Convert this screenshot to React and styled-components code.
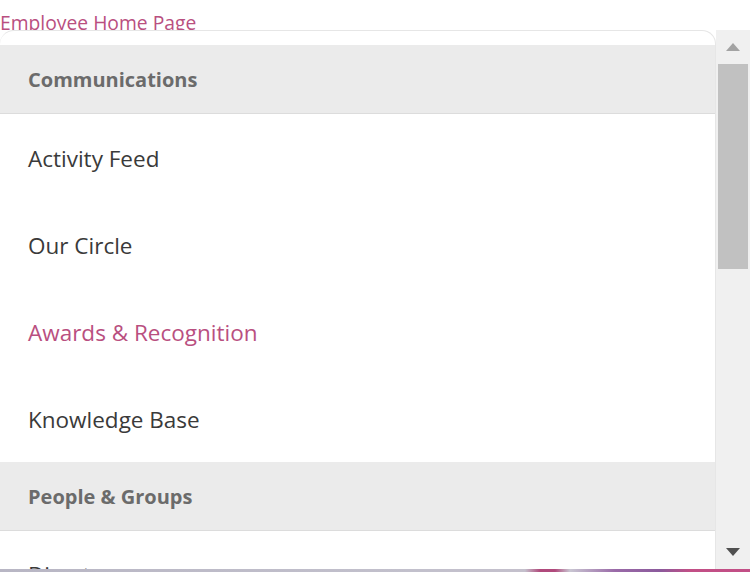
import React from 'react'
import styled, { createGlobalStyle } from 'styled-components'

const GlobalStyle = createGlobalStyle`
    html, body {
        margin: 0;
        padding: 0;
        background-color: #ffffff;
        font-family: "Open Sans", "Noto Sans", sans-serif;
    }
`

const Page = styled.div`
    width: 750px;
    height: 572px;
    display: flex;
    flex-direction: column;
    overflow: hidden;
    background-color: #ffffff;
`

const Crumb = styled.a`
    display: block;
    height: 30px;
    overflow: hidden;
    font-size: 19.3px;
    line-height: 45px;
    color: #b94f80;
    text-decoration: none;
    flex-shrink: 0;
    white-space: nowrap;
`

const Body = styled.div`
    flex: 1;
    display: flex;
    min-height: 0;
`

const Panel = styled.div`
    flex: 1;
    min-width: 0;
    display: flex;
    flex-direction: column;
    padding-top: 14px;
    border: 1px solid #e6e6e6;
    border-bottom: none;
    border-left: none;
    border-radius: 14px 14px 0 0;
    background-color: #ffffff;
    overflow: hidden;
`

const Section = styled.div`
    height: 68px;
    flex-shrink: 0;
    display: flex;
    align-items: center;
    padding-left: 28px;
    background-color: #ebebeb;
    border-bottom: 1px solid #dcdcdc;
    font-size: 20px;
    font-weight: 700;
    color: #6b6b6b;
`

const Item = styled.div`
    height: 87px;
    flex-shrink: 0;
    display: flex;
    align-items: center;
    padding-left: 28px;
    padding-top: 1px;
    box-sizing: border-box;
    font-size: 22.5px;
    color: ${props => props.active ? '#b94f80' : '#3a3a3a'};
`

const LastItem = styled(Item)`
    align-items: flex-start;
    padding-top: 28px;
`

const Scrollbar = styled.div`
    width: 34px;
    flex-shrink: 0;
    display: flex;
    flex-direction: column;
    align-items: center;
    background-color: #f0f0f0;
`

const Arrow = styled.div`
    height: 34px;
    width: 100%;
    display: flex;
    align-items: center;
    justify-content: center;
    flex-shrink: 0;
`

const Thumb = styled.div`
    width: 30px;
    height: 205px;
    background-color: #c1c1c1;
    flex-shrink: 0;
`

const Spacer = styled.div`
    flex: 1;
`

const Strip = styled.div`
    height: 3px;
    flex-shrink: 0;
    background: linear-gradient(90deg, #b8b6c4 0%, #c2c0cc 55%, #c4c0cc 70%, #b04a7c 72%, #b04a7c 74%, #c9c6d2 76%, #9a6aa8 82%, #8b5a9c 88%, #c24f86 92%, #c24f86 100%);
`

const UpIcon = ({ color }) => (
    <svg width="16" height="10" viewBox="0 0 16 10">
        <polygon points="8,1 15,9 1,9" fill={color} />
    </svg>
)

const DownIcon = ({ color }) => (
    <svg width="16" height="10" viewBox="0 0 16 10">
        <polygon points="1,1 15,1 8,9" fill={color} />
    </svg>
)

const communications = ['Activity Feed', 'Our Circle', 'Awards & Recognition', 'Knowledge Base']

const App = () => {
    return (
        <Page>
            <GlobalStyle />
            <Crumb href="#">Employee Home Page</Crumb>
            <Body>
                <Panel>
                    <Section>Communications</Section>
                    {communications.map(item => (
                        <Item key={item} active={item === 'Awards & Recognition'}>{item}</Item>
                    ))}
                    <Section>People &amp; Groups</Section>
                    <LastItem>Directory</LastItem>
                </Panel>
                <Scrollbar>
                    <Arrow><UpIcon color="#a3a3a3" /></Arrow>
                    <Thumb />
                    <Spacer />
                    <Arrow><DownIcon color="#505050" /></Arrow>
                </Scrollbar>
            </Body>
            <Strip />
        </Page>
    )
}

export default App
